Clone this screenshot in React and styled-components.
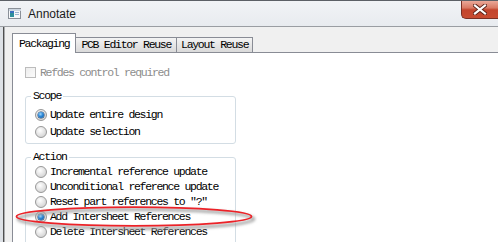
import React from 'react';
import styled, { createGlobalStyle } from 'styled-components';

const GlobalStyle = createGlobalStyle`
  * { box-sizing: border-box; }
  body {
    margin: 0;
    width: 498px;
    height: 242px;
    overflow: hidden;
    background: #f0f0f0;
  }
`;

const Window = styled.div`
  position: relative;
  width: 498px;
  height: 242px;
  display: flex;
  flex-direction: column;
  overflow: hidden;
  background: #f0f0f0;
  font-family: "Liberation Mono", "DejaVu Sans Mono", monospace;
  font-size: 11.5px;
  letter-spacing: -1.3px;
  color: #000;
`;

const TitleBar = styled.div`
  height: 27px;
  display: flex;
  align-items: flex-start;
  border-top: 1px solid #5c6066;
  border-bottom: 1px solid #9a9da2;
  background: linear-gradient(#f1f3f6, #e8ebef);
`;

const TitleIcon = styled.svg`
  margin: 7px 0 0 8px;
  flex: none;
`;

const TitleText = styled.div`
  margin: 5px 0 0 7px;
  font-family: "Liberation Sans", Arial, sans-serif;
  font-size: 12px;
  letter-spacing: 0;
  line-height: 16px;
  color: #1b1b1b;
`;

const CloseButton = styled.div`
  margin-left: auto;
  width: 37px;
  height: 18px;
  display: flex;
  align-items: center;
  justify-content: center;
  border: 1px solid #7a3024;
  border-top: none;
  border-right: none;
  border-radius: 0 0 0 5px;
  background: linear-gradient(#eaa898 0%, #d97a64 40%, #c3452d 52%, #c84c31 100%);
`;

const Body = styled.div`
  flex: 1;
  display: flex;
  min-height: 0;
`;

const Frame = styled.div`
  width: 5px;
  flex: none;
  background: linear-gradient(to right, #dde1e6 0 3px, #4f4f4f 3px 4px, #a9abae 4px 5px);
`;

const Content = styled.div`
  flex: 1;
  display: flex;
  flex-direction: column;
  padding: 6px 0 0 7px;
  min-width: 0;
`;

const TabRow = styled.div`
  display: flex;
  align-items: flex-end;
  height: 19px;
`;

const Tab = styled.div`
  position: relative;
  z-index: ${p => (p.$active ? 1 : 0)};
  height: ${p => (p.$active ? '20px' : '15px')};
  margin-bottom: ${p => (p.$active ? '-1px' : '0')};
  padding: 0 ${p => p.$pad}px;
  line-height: ${p => (p.$active ? '20px' : '14px')};
  white-space: nowrap;
  border: 1px solid #898c95;
  border-bottom: none;
  border-left: ${p => (p.$first ? '1px solid #898c95' : 'none')};
  background: ${p => (p.$active ? '#fff' : 'linear-gradient(#f4f4f4, #e6e6e6 50%, #dadada)')};
`;

const Panel = styled.div`
  flex: 1;
  background: #fff;
  border-top: 1px solid #898c95;
  border-left: 1px solid #898c95;
  padding: 14px 0 0 12px;
`;

const CheckRow = styled.div`
  display: flex;
  align-items: center;
  height: 11px;
  gap: 4px;
  color: #8d8d8d;
`;

const CheckBox = styled.span`
  width: 11px;
  height: 11px;
  flex: none;
  border: 1px solid #bcbcbc;
  background: linear-gradient(135deg, #ededed, #fbfbfb);
`;

const Group = styled.fieldset`
  width: 211px;
  margin: ${p => p.$top}px 0 0 0;
  padding: ${p => p.$padTop}px 0 ${p => p.$padBottom}px 9px;
  border: 1px solid #d3dde4;
  border-radius: 3px;
  min-width: 0;
`;

const Legend = styled.legend`
  margin-left: -4px;
  padding: 0 2px;
  line-height: 12px;
  height: 12px;
`;

const RadioRow = styled.div`
  display: flex;
  align-items: center;
  gap: 3px;
  height: ${p => p.$h}px;
  white-space: nowrap;
`;

const Radio = styled.span`
  position: relative;
  width: 12px;
  height: 12px;
  flex: none;
  border-radius: 50%;
  border: 1px solid #989898;
  background: radial-gradient(circle at 40% 35%, #ffffff 0%, #e6e6e6 45%, #c9c9c9 100%);

  &::after {
    content: '';
    display: ${p => (p.$checked ? 'block' : 'none')};
    position: absolute;
    left: 2px;
    top: 2px;
    width: 6px;
    height: 6px;
    border-radius: 50%;
    background: radial-gradient(circle at 40% 35%, #9fd6fb 0%, #2a86d6 45%, #0b4f94 100%);
    box-shadow: 0 0 0 0.5px #1d3f66;
  }
`;

const Annotation = styled.svg`
  position: absolute;
  left: 0;
  top: 0;
  pointer-events: none;
`;

const scope = [
  { label: 'Update entire design', checked: true },
  { label: 'Update selection' },
];

const actions = [
  { label: 'Incremental reference update' },
  { label: 'Unconditional reference update' },
  { label: 'Reset part references to "?"' },
  { label: 'Add Intersheet References', checked: true },
  { label: 'Delete Intersheet References' },
];

export default function App() {
  return (
    <Window>
      <GlobalStyle />
      <TitleBar>
        <TitleIcon width="13" height="11" viewBox="0 0 13 11">
          <rect x="0.5" y="0.5" width="12" height="10" fill="#f7f8fa" stroke="#8a9098" />
          <rect x="1" y="1" width="12" height="2" fill="#cdd6e0" />
          <rect x="2" y="3" width="4" height="6" fill="#2f8f9a" />
          <rect x="2" y="3" width="4" height="2" fill="#3a6fc0" />
          <rect x="7" y="4" width="4" height="1" fill="#9bb4cf" />
          <rect x="7" y="6" width="4" height="1" fill="#9bb4cf" />
        </TitleIcon>
        <TitleText>Annotate</TitleText>
        <CloseButton>
          <svg width="14" height="11" viewBox="0 0 14 11">
            <path d="M2 1.5 L12 9.5 M12 1.5 L2 9.5" stroke="#5a2218" strokeWidth="4" strokeLinecap="square" />
            <path d="M2 1.5 L12 9.5 M12 1.5 L2 9.5" stroke="#fff" strokeWidth="2.2" strokeLinecap="square" />
          </svg>
        </CloseButton>
      </TitleBar>
      <Body>
        <Frame />
        <Content>
          <TabRow>
            <Tab $active $first $pad={6}>Packaging</Tab>
            <Tab $pad={5}>PCB Editor Reuse</Tab>
            <Tab $pad={4}>Layout Reuse</Tab>
          </TabRow>
          <Panel>
            <CheckRow>
              <CheckBox />
              Refdes control required
            </CheckRow>
            <Group $top={12} $padTop={4} $padBottom={3}>
              <Legend>Scope</Legend>
              {scope.map(o => (
                <RadioRow key={o.label} $h={17}>
                  <Radio $checked={o.checked} />
                  {o.label}
                </RadioRow>
              ))}
            </Group>
            <Group $top={7} $padTop={1} $padBottom={20}>
              <Legend>Action</Legend>
              {actions.map(o => (
                <RadioRow key={o.label} $h={15}>
                  <Radio $checked={o.checked} />
                  {o.label}
                </RadioRow>
              ))}
            </Group>
          </Panel>
        </Content>
      </Body>
      <Annotation width="498" height="242" viewBox="0 0 498 242">
        <defs>
          <filter id="soft" x="-10%" y="-60%" width="120%" height="220%">
            <feGaussianBlur stdDeviation="1.6" />
          </filter>
        </defs>
        <ellipse cx="136" cy="219" rx="118" ry="9.5" fill="none" stroke="#9a9a9a" strokeWidth="2.5" filter="url(#soft)" />
        <ellipse cx="134" cy="216.5" rx="117.5" ry="9.3" fill="none" stroke="#ec2228" strokeWidth="1.8" />
      </Annotation>
    </Window>
  );
}
